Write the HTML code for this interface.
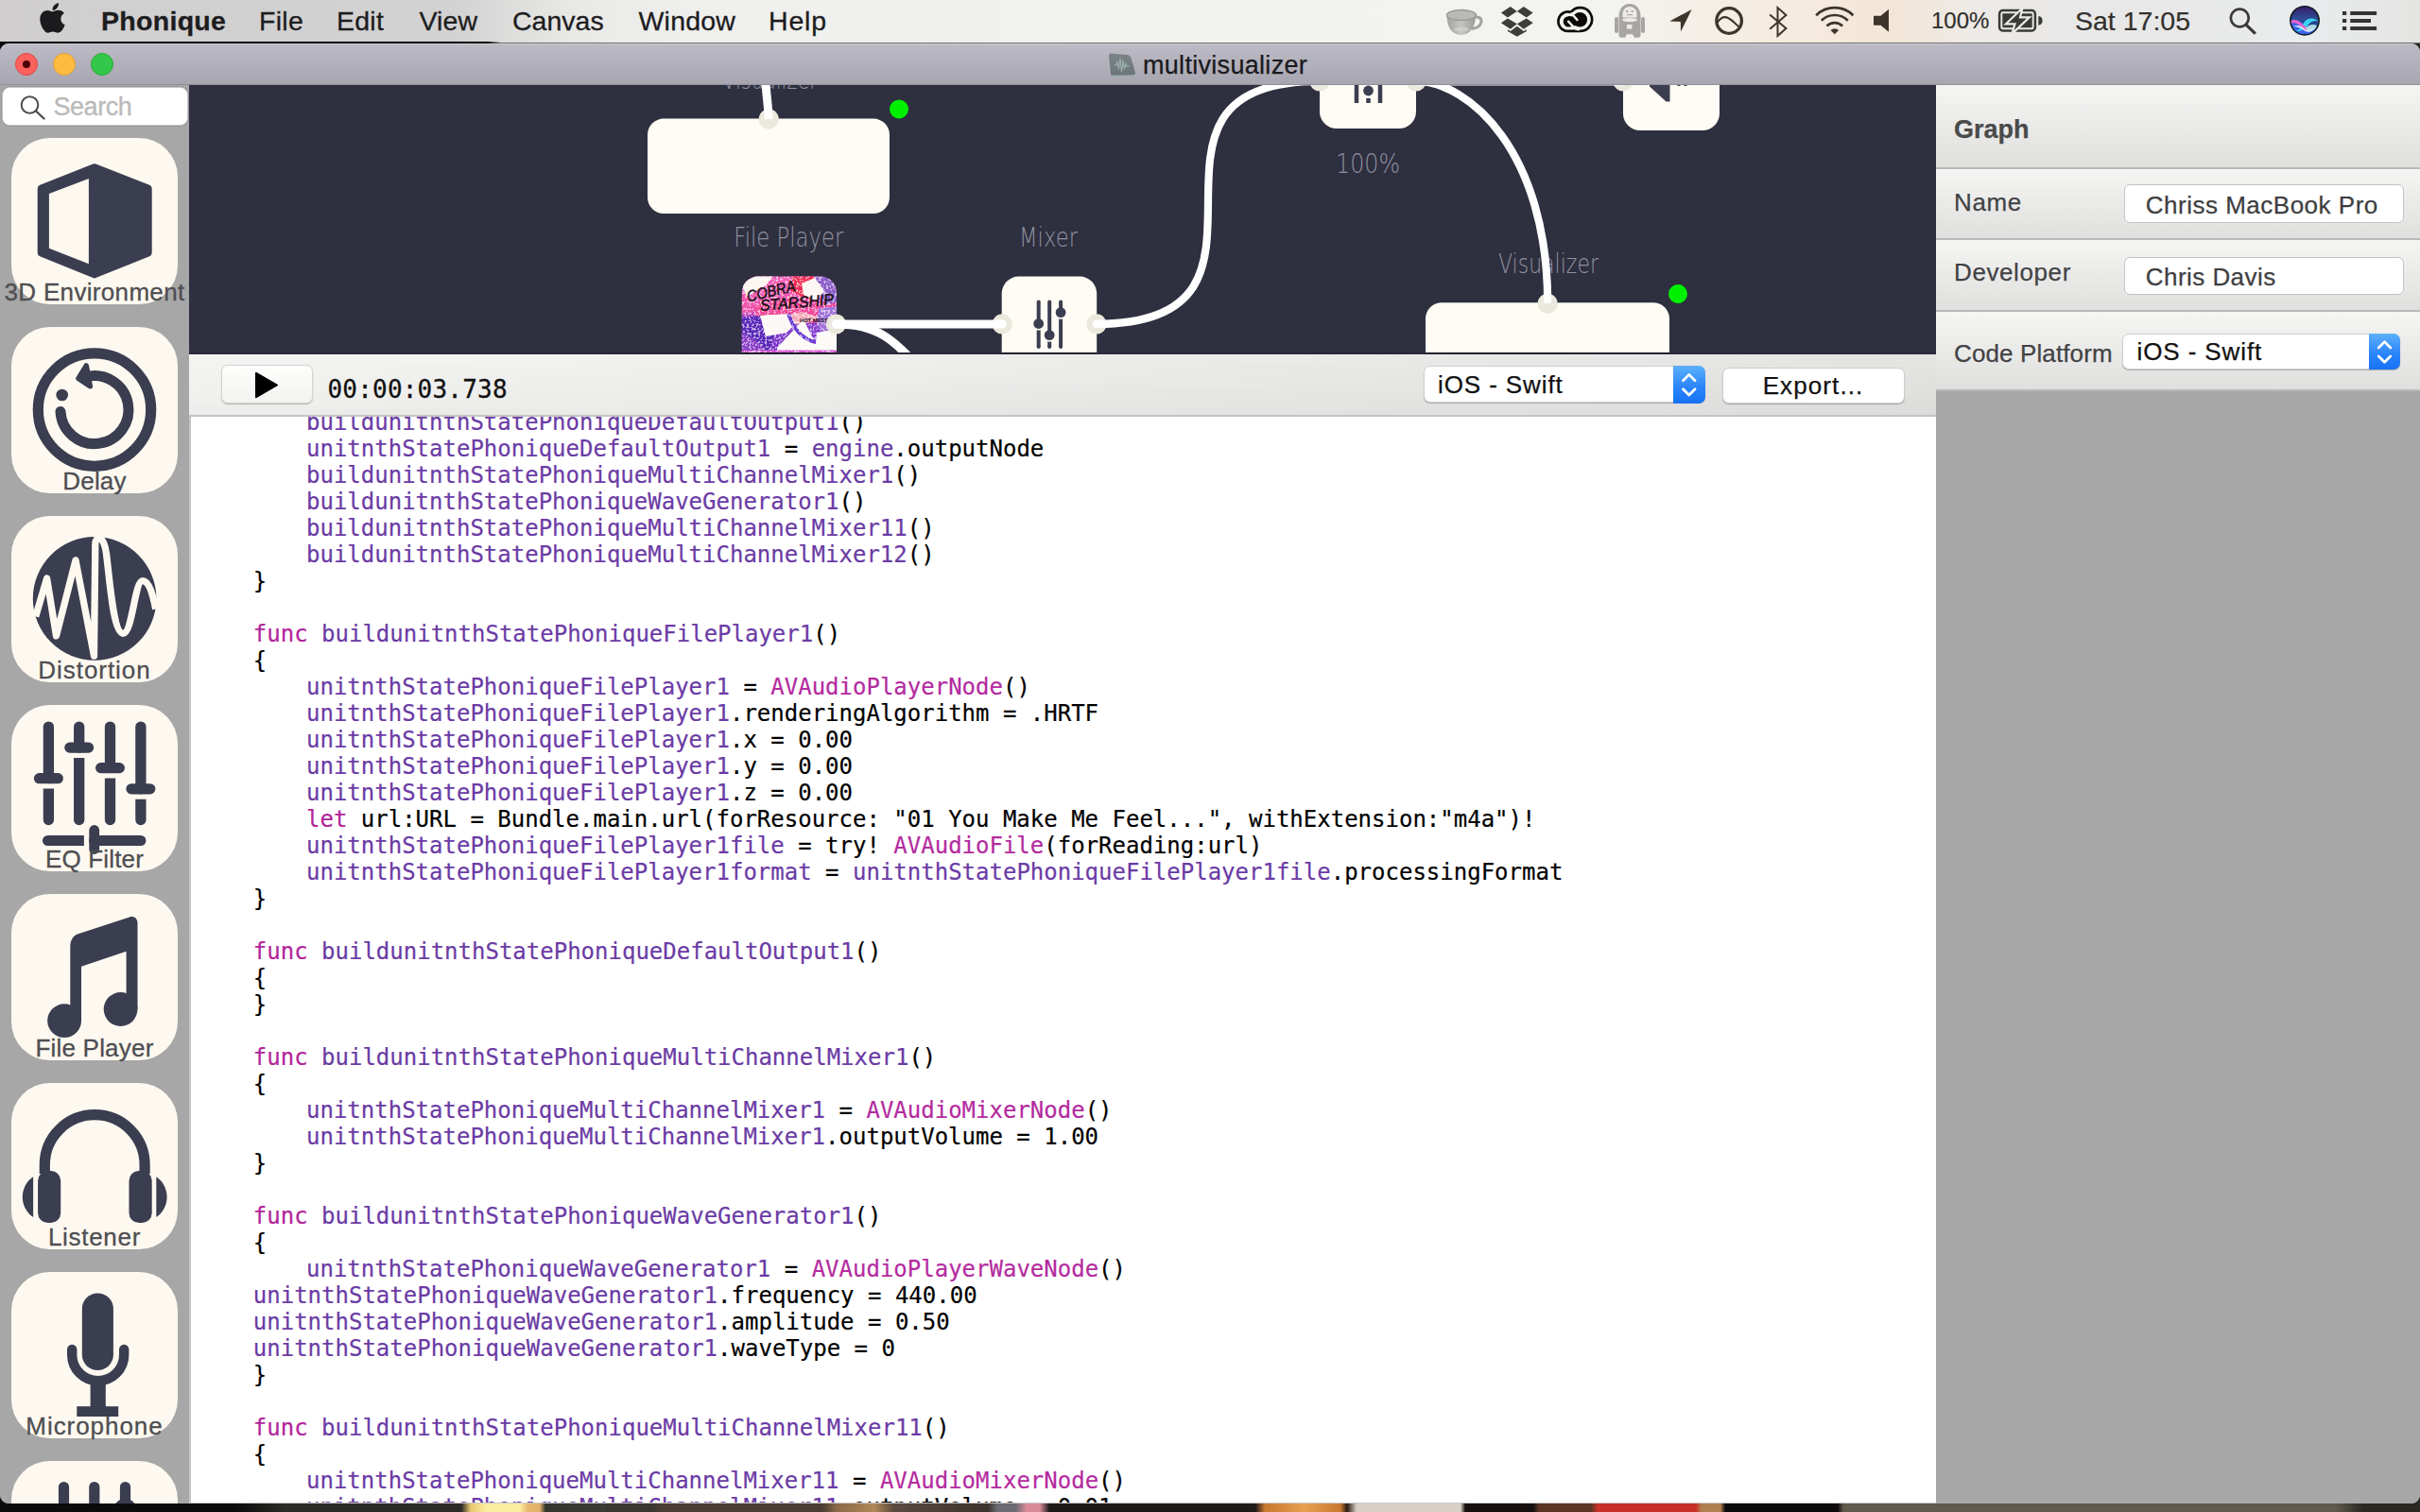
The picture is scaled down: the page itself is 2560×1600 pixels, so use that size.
<!DOCTYPE html>
<html lang="en">
<head>
<meta charset="utf-8">
<title>Phonique - multivisualizer</title>
<style>
*{box-sizing:border-box;margin:0;padding:0}
html,body{width:2560px;height:1600px;overflow:hidden}
body{position:relative;background:#1a1512;font-family:"Liberation Sans",sans-serif;color:#1d1d1f}
.abs{position:absolute}
/* ---------- wallpaper strip ---------- */
#wall{position:absolute;left:0;top:0;width:2560px;height:1600px;background:linear-gradient(90deg,#0b0b0b 0,#0b0b0b 250px,#2a2a28 300px,#2c2b28 488px,#e8c870 498px,#fbeea0 515px,#fbeea0 550px,#e8b870 558px,#e0b068 571px,#34362e 577px,#3a3c36 640px,#3a3632 644px,#3a3632 690px,#4a3d33 700px,#4a3d33 870px,#8a6a48 885px,#b08858 925px,#5a4a3e 945px,#3c332e 1045px,#6a6a70 1055px,#6a6a70 1074px,#d88a98 1086px,#d88a98 1100px,#1f1a1a 1110px,#1f1a1a 1328px,#c87830 1338px,#e8a050 1380px,#c87830 1418px,#2a1a12 1425px,#d8d0c4 1435px,#d8d0c4 1545px,#15100f 1550px,#15100f 1622px,#5a3525 1628px,#5a3525 1683px,#c83028 1690px,#c83028 1794px,#b08050 1800px,#b08050 1820px,#0c0a0a 1825px,#0c0a0a 1944px,#5e5a4c 1950px,#5e5a4c 2470px,#2a2822 2500px,#2a2822 2560px)}
/* ---------- menubar ---------- */
#menubar{position:absolute;left:0;top:0;width:2560px;height:44.500px;background:linear-gradient(90deg,#d0cece 0,#d3d2d2 480px,#dcdbda 530px,#e9e9e7 610px,#efefed 720px,#f2f2ef 1300px,#f3f3f0 1700px,#f5ebde 1900px,#f3e6d8 2000px,#eeeae6 2080px,#e9e8e7 2160px,#e8e8e8 2300px,#e9eced 2440px,#e4e4e2 2560px);font-size:28.5px;color:#1d1d1f}
#menubar .mi{position:absolute;top:0;height:44px;line-height:45px;white-space:nowrap;-webkit-text-stroke:.3px #1d1d1f}
#menuline{position:absolute;left:0;top:43.500px;width:2560px;height:2.500px;background:linear-gradient(180deg,rgba(0,0,0,0) 0,rgba(0,0,0,0) 1px,#6e6d6b 1px,#6e6d6b 100%)}
#menuline2{position:absolute;left:0;top:43.500px;width:540px;height:2.500px;background:linear-gradient(90deg,#000 0,#000 515px,rgba(0,0,0,0) 530px)}
/* ---------- window ---------- */
#window{position:absolute;left:0;top:46px;width:2560px;height:1545px;border-radius:9px;overflow:hidden;background:#a7a7a7}
#titlebar{position:absolute;left:0;top:0;width:2560px;height:44px;background:linear-gradient(180deg,#bcbac4 0,#b4b2bc 40%,#a7a5af 100%);border-top:1px solid #cfcdd7;border-bottom:1px solid #908e98}
.tl{position:absolute;top:9px;width:24px;height:24px;border-radius:50%}
#title{position:absolute;left:1209px;top:0;height:44px;line-height:44px;font-size:27px;letter-spacing:.3px;color:#19181c;white-space:nowrap;-webkit-text-stroke:.25px #19181c}
/* ---------- sidebar ---------- */
#sidebar{position:absolute;left:0;top:44px;width:200px;height:1501px;background:#a7a7a7;overflow:hidden}
#search{position:absolute;left:1.500px;top:1.500px;width:197.500px;height:41px;background:#fff;border-radius:8px;border:1px solid #c4c4c4;box-shadow:0 0 0 .6px #8c8c8c}
#search span{position:absolute;left:54px;top:1px;line-height:38px;font-size:27px;letter-spacing:-.45px;color:#bababa;-webkit-text-stroke:.35px #bababa}
.tile{position:absolute;left:12px;width:176px;height:176px;border-radius:41px;background:#fef9f0}
.tile .lb{position:absolute;left:-12px;width:200px;text-align:center;top:147.600px;font-size:26px;line-height:30px;color:#4e4e52;white-space:nowrap;-webkit-text-stroke:.3px #4e4e52}
.tile svg{position:absolute;left:0;top:0}
/* ---------- canvas ---------- */
#canvas{position:absolute;left:200px;top:44px;width:1848px;height:284.600px;background:#2e2f3f;overflow:hidden}
#canvas svg{position:absolute;left:0;top:0}
/* ---------- toolbar ---------- */
#toolbar{position:absolute;left:200px;top:328.600px;width:1848px;height:66.400px;background:linear-gradient(180deg,rgba(255,255,255,.12) 0,rgba(0,0,0,.025) 100%),linear-gradient(90deg,#f3f3f1 0,#eeeeec 35%,#e6e6e4 70%,#e1e1df 100%);border-bottom:2px solid #c4c4c4}
.btn{-webkit-text-stroke:.25px;position:absolute;background:#fff;border-radius:7px;border:1px solid #cfcfcf;box-shadow:0 1px 1px rgba(0,0,0,.25)}
/* ---------- code ---------- */
#code{position:absolute;left:200px;top:395px;width:1848px;height:1150px;background:#fff;border-left:2px solid #c4c4c4;overflow:hidden}
#code pre{position:absolute;left:8px;top:-8px;font-family:"DejaVu Sans Mono","Liberation Mono",monospace;font-size:24px;line-height:28px;color:#000;white-space:pre;-webkit-text-stroke:.2px}
.s{letter-spacing:-.4px}.p{color:#6b3ba5}.k{color:#b2259a}.t{color:#b42ba0}
/* ---------- inspector ---------- */
#insp{position:absolute;left:2048px;top:44px;width:512px;height:1501px;background:#a7a7a7}
.row{position:absolute;left:0;width:512px;background:linear-gradient(180deg,#f5f5f3 0,#ebebea 45%,#dfdfde 100%);border-bottom:2px solid #b9b9b9;font-size:26px;color:#424244;-webkit-text-stroke:.25px}
.row .lab{position:absolute;left:19px;white-space:nowrap}
.inp{position:absolute;background:#fff;border:1px solid #c3c3c3;border-radius:6px;font-size:26px;color:#3e3e40;white-space:nowrap}
</style>
</head>
<body>
<div id="wall"></div>
<div id="menubar">
<svg class="abs" style="left:41.7px;top:1.7px" width="27" height="34" viewBox="0 28 385 456"><path fill="#1b1a1c" d="M318.7 268.7c-.2-36.7 16.4-64.4 50-84.8-18.8-26.9-47.2-41.7-84.7-44.6-35.5-2.8-74.3 20.7-88.5 20.7-15 0-49.4-19.7-76.4-19.7C63.3 141.2 4 184.8 4 273.5q0 39.3 14.4 81.2c12.8 36.7 59 126.7 107.2 125.2 25.2-.6 43-17.9 75.8-17.9 31.8 0 48.3 17.9 76.4 17.9 48.6-.7 90.4-82.5 102.6-119.3-65.2-30.7-61.7-90-61.7-91.9zm-56.6-164.2c27.3-32.4 24.8-61.9 24-72.5-24.1 1.4-52 16.4-67.9 34.9-17.5 19.8-27.8 44.3-25.6 71.9 26.1 2 49.9-11.4 69.5-34.3z"/></svg>
<div class="mi" style="left:107px;font-weight:bold;letter-spacing:.3px">Phonique</div>
<div class="mi" style="left:274px;letter-spacing:.3px">File</div>
<div class="mi" style="left:356px;letter-spacing:.25px">Edit</div>
<div class="mi" style="left:443.5px;letter-spacing:.1px">View</div>
<div class="mi" style="left:542px;letter-spacing:0px">Canvas</div>
<div class="mi" style="left:675.5px;letter-spacing:.2px">Window</div>
<div class="mi" style="left:813px;letter-spacing:.8px">Help</div>
<div class="mi" style="left:2043px;font-size:24px;letter-spacing:0px;line-height:43px;color:#33302d;-webkit-text-stroke:.2px #33302d">100%</div>
<div class="mi" style="left:2195px;letter-spacing:0px;color:#33302d;-webkit-text-stroke:.2px #33302d">Sat 17:05</div>
<svg class="abs" style="left:1500px;top:0" width="1060" height="44" viewBox="1500 0 1060 44">
<defs>
<linearGradient id="cupg" x1="0" y1="0" x2="1" y2="0"><stop offset="0" stop-color="#a3a3a1"/><stop offset=".5" stop-color="#c4c4c2"/><stop offset="1" stop-color="#9b9b99"/></linearGradient>
<linearGradient id="sirig" x1="0" y1="0" x2="0" y2="1"><stop offset="0" stop-color="#3b1d6e"/><stop offset=".45" stop-color="#2c4f96"/><stop offset="1" stop-color="#1a2f8c"/></linearGradient>
<clipPath id="siric"><circle cx="2438" cy="21.8" r="14.3"/></clipPath>
</defs>
<!-- cup -->
<g>
<path d="M1557 18.5c6-1.5 10.500 0 10 4.500c-.5 4-4.500 7-10 7.500" fill="none" stroke="#a4a4a2" stroke-width="3"/>
<path d="M1530.500 16c0 12 5 21 15 21s15.500-9 15.500-21z" fill="url(#cupg)"/>
<ellipse cx="1546" cy="16" rx="15.500" ry="5.500" fill="#b9b9b7" stroke="#9a9a98" stroke-width="1.500"/>
<ellipse cx="1546" cy="31" rx="8" ry="2.500" fill="#d4d4d2" opacity=".7"/>
</g>
<!-- dropbox -->
<g fill="#3d3d3b">
<path d="M1587.900 13.400l9.900-6.500 7 5.200-9.900 6.500z"/>
<path d="M1621.700 13.400l-9.900-6.500-7 5.200 9.900 6.500z"/>
<path d="M1587.900 24.300l7-4.700 9.900 5.700-7 5.400z"/>
<path d="M1621.700 24.300l-7-4.700-9.900 5.700 7 5.400z"/>
<path d="M1594.900 31.200l2.900 1.900 7-5.300 7.100 5.300 3-1.900v1.800l-10.100 5.700-9.900-5.700z"/>
</g>
<!-- creative cloud -->
<g>
<path d="M1658.600 32.900A10.200 10.200 0 1 1 1661.800 13A12.400 12.400 0 1 1 1671.700 32.900z" fill="#f3f3f0" stroke="#0d0b08" stroke-width="2.700" stroke-linejoin="round"/>
<circle cx="1659.400" cy="22.900" r="5.700" fill="#0d0b08"/>
<circle cx="1671.300" cy="20.800" r="7.800" fill="#0d0b08"/>
<path d="M1659 17.300l6 0 5 6 -5 5 -6-2z" fill="#0d0b08"/>
<path d="M1659 22.700l5.700 5.900c1.500 1.500 3.300 2.500 5.500 2.700" fill="none" stroke="#f3f3f0" stroke-width="2.400" stroke-linecap="round"/>
<path d="M1662.500 14.300l6 6.800" fill="none" stroke="#f3f3f0" stroke-width="2.400" stroke-linecap="round"/>
</g>
<!-- robot -->
<g fill="#a8a6a2">
<path d="M1712.500 17.500c0-8 4.500-13.500 11.500-13.500s11.500 5.500 11.500 13.500v19.500c0 1.500-1 2.700-2.500 2.700h-4l-2-3.500h-6l-2 3.500h-4c-1.500 0-2.500-1.200-2.500-2.700z"/>
<rect x="1708" y="18" width="4" height="17" rx="2"/>
<rect x="1736" y="18" width="4" height="17" rx="2"/>
</g>
<path d="M1716.500 15.500c0-5 3-8.500 7.500-8.500s7.500 3.500 7.500 8.500v3h-15z" fill="#ecebe7"/>
<ellipse cx="1724" cy="21" rx="8" ry="2" fill="#ecebe7"/>
<rect x="1721" y="26" width="5.500" height="4.500" fill="#ecebe7"/>
<rect x="1720.300" y="11" width="2" height="2" fill="#a8a6a2"/><rect x="1725.700" y="11" width="2" height="2" fill="#a8a6a2"/><rect x="1721" y="15" width="6" height="1.200" fill="#a8a6a2"/>
<!-- location arrow -->
<path d="M1789.600 9.900l-23.400 12.600 11.600.4.200 10.500z" fill="#3d352c"/>
<!-- circle curve -->
<circle cx="1829.100" cy="22" r="13.300" fill="none" stroke="#3d352c" stroke-width="3.300"/>
<path d="M1817 23.500c3-4.500 7-6.500 11-4.500 4.500 2.200 8.500 7 12.500 10" fill="none" stroke="#3d352c" stroke-width="2"/>
<!-- bluetooth -->
<path d="M1872.200 15.400l17.200 14.500-8.900 8v-29.800l8.900 7.800-17.200 14.800" fill="none" stroke="#3d352c" stroke-width="2" stroke-linejoin="miter"/>
<!-- wifi -->
<g fill="none" stroke="#3d352c" stroke-width="2.700">
<path d="M1921.200 16.200a27.800 27.800 0 0 1 39.200 0"/>
<path d="M1926.800 21.800a19.800 19.800 0 0 1 28 0"/>
<path d="M1932.500 27.500a11.800 11.800 0 0 1 16.600 0"/>
</g>
<path d="M1940.800 36.200l-4.300-4.300a6.100 6.100 0 0 1 8.600 0z" fill="#3d352c"/>
<!-- volume -->
<path d="M1982 17.800c0-.6.400-1 1-1h6.500l8.500-7v24l-8.500-7h-6.500c-.6 0-1-.4-1-1z" fill="#3d352c"/>
<!-- battery -->
<rect x="2115.100" y="11.100" width="37.800" height="21.400" rx="3.500" fill="none" stroke="#3a3a38" stroke-width="2.500"/>
<rect x="2118.300" y="14.300" width="31.400" height="15" rx="1" fill="#3a3a38"/>
<path d="M2156.300 16.900a5 5 0 0 1 0 9.900z" fill="#3a3a38"/>
<path d="M2139.500 8.500l-17.500 16.800h9.500l-3.200 10.500 18.500-17.500h-9.800z" fill="#3a3a38" stroke="#ecebe9" stroke-width="2.200" stroke-linejoin="miter"/>
<!-- spotlight -->
<circle cx="2369.300" cy="19" r="9.400" fill="none" stroke="#3a3a3a" stroke-width="2.700"/>
<path d="M2376.200 26.300l9.600 9.400" stroke="#3a3a3a" stroke-width="3.200" stroke-linecap="butt"/>
<!-- siri -->
<circle cx="2438" cy="21.800" r="15.900" fill="#0e1c24"/>
<circle cx="2438" cy="21.800" r="14.300" fill="url(#sirig)"/>
<g clip-path="url(#siric)">
<path d="M2422 24c5-4 10-3 15 1.500s10 6 17 2v12h-32z" fill="#3a63e8"/>
<path d="M2436 26c4-8 12-8 17-3-4-2-8-1-11 3s-8 8-14 7c4-1 6-4 8-7z" fill="#38d6f0"/>
<path d="M2423 22c4-2 8-1 12 3s8 7 14 6c-5 3-10 2-14-2s-8-6-12-4z" fill="#ea5fd0"/>
<path d="M2426 28c4-2 8-1 11 2s8 3 12 0c-3 4-8 5-12 2s-7-4-11-4z" fill="#eef4ff" opacity=".9"/>
<path d="M2439 30c3-4 8-5 12-3-1 4-5 6-9 6z" fill="#c6f5f4" opacity=".85"/>
</g>
<!-- notification list -->
<g fill="#333">
<rect x="2478" y="12" width="4.200" height="4"/><rect x="2486.200" y="12" width="27.900" height="4"/>
<rect x="2478" y="20" width="4.200" height="4"/><rect x="2486.200" y="20" width="21.800" height="4"/>
<rect x="2478" y="28" width="4.200" height="4"/><rect x="2486.200" y="28" width="27.900" height="4"/>
</g>
</svg>
</div>
<div id="menuline"></div><div id="menuline2"></div>
<div id="window">
<div id="titlebar">
<div class="tl" style="left:16px;background:#fc615d;border:1px solid #df4744"></div>
<div class="abs" style="left:24px;top:17px;width:8px;height:8px;border-radius:50%;background:#4c0102"></div>
<div class="tl" style="left:56px;background:#fdbc40;border:1px solid #de9f34"></div>
<div class="tl" style="left:96px;background:#34c84a;border:1px solid #27aa35"></div>
<svg class="abs" style="left:1170px;top:7px" width="34" height="30" viewBox="1170 53 34 30">
<defs><linearGradient id="ticg" x1="0" y1="0" x2="0" y2="1"><stop offset="0" stop-color="#7d8487"/><stop offset="1" stop-color="#6a7477"/></linearGradient></defs>
<path d="M1175 55.500l17.500 1.500c2 .2 3.500 1.500 4 3.500l4.500 15.500c.5 2-1 3.500-3 3.500l-19.500.5c-2 0-3.500-1.500-3.500-3.500l-2-18c-.2-2 .8-3.200 2-3z" fill="url(#ticg)"/>
<path d="M1176 79.500l22-.5c1.500 0 2.500-.5 3-1.500" fill="none" stroke="#9fb0b0" stroke-width="1.500"/>
<path d="M1179 68h2l1-4 1.500 8 1.500-11 1.500 14 1.500-12 1.500 9 1.500-6 1 3h3" fill="none" stroke="#a3bab6" stroke-width="1.200" opacity=".85" stroke-linejoin="round"/>
</svg>
<div id="title">multivisualizer</div>
</div>
<div id="sidebar">
<div id="search"><svg class="abs" style="left:17px;top:7px" width="30" height="28" viewBox="0 0 30 28"><circle cx="11.500" cy="11" r="8.800" fill="none" stroke="#4d4d4d" stroke-width="2"/><path d="M18 17.500l8.500 8" stroke="#4d4d4d" stroke-width="2.400" stroke-linecap="round"/></svg><span>Search</span></div>
<div class="tile" style="top:56px"><svg width="176" height="176" viewBox="0 0 176 176"><path d="M87.900 31.300L144.700 53.500V121.500L87.900 144.400L31.700 121.500V53.500Z" fill="#3b3d50" stroke="#3b3d50" stroke-width="8" stroke-linejoin="round"/><path d="M39.900 59.100L81.900 42.900V133.200L39.900 116.700Z" fill="#fef9f0"/></svg><div class="lb" style="letter-spacing:0.33px">3D Environment</div></div>
<div class="tile" style="top:256px"><svg width="176" height="176" viewBox="0 0 176 176"><circle cx="88" cy="87.600" r="59.700" fill="none" stroke="#3b3d50" stroke-width="11.200"/>
<path d="M78.700 52.800A36 36 0 1 1 52 89.500" fill="none" stroke="#3b3d50" stroke-width="11" stroke-linecap="round"/>
<path d="M71 54.400L79.300 41L83.300 62.800Z" fill="#3b3d50" stroke="#3b3d50" stroke-width="5.500" stroke-linejoin="round"/>
<circle cx="53.700" cy="72" r="6.300" fill="#3b3d50"/></svg><div class="lb" style="letter-spacing:0.2px">Delay</div></div>
<div class="tile" style="top:456px"><svg width="176" height="176" viewBox="0 0 176 176"><circle cx="88.100" cy="87.400" r="65.300" fill="#3b3d50"/>
<path d="M25.700 106.400L37.600 66.100L47.500 126.900L68 46.900L87.500 148.100L88.800 30C89 20 98 20 100.500 40C104.500 72 108 124.300 118.300 124.300C128 124.300 130.500 68.700 138.800 68.700C146 68.700 150 85 152.700 98.500" fill="none" stroke="#fef9f0" stroke-width="7.300" stroke-linejoin="round" stroke-linecap="butt"/></svg><div class="lb" style="letter-spacing:0.95px">Distortion</div></div>
<div class="tile" style="top:656px"><svg width="176" height="176" viewBox="0 0 176 176"><path d="M39.4 23.100V77.7" stroke="#3b3d50" stroke-width="11.3" stroke-linecap="round" fill="none"/><rect x="23.9" y="72.1" width="31" height="11.2" rx="5.600" fill="#3b3d50"/><path d="M33.75 88.6H45.05V121.500A5.650 5.650 0 0 1 33.75 121.500Z" fill="#3b3d50"/><path d="M71.7 23.100V45.1" stroke="#3b3d50" stroke-width="11.3" stroke-linecap="round" fill="none"/><rect x="56.2" y="39.5" width="31" height="11.2" rx="5.600" fill="#3b3d50"/><path d="M66.05 56.0H77.35V121.500A5.650 5.650 0 0 1 66.05 121.500Z" fill="#3b3d50"/><path d="M104.5 23.100V66.6" stroke="#3b3d50" stroke-width="11.3" stroke-linecap="round" fill="none"/><rect x="89.0" y="61.0" width="31" height="11.2" rx="5.600" fill="#3b3d50"/><path d="M98.85 77.5H110.15V121.500A5.650 5.650 0 0 1 98.85 121.500Z" fill="#3b3d50"/><path d="M136.9 23.100V88.8" stroke="#3b3d50" stroke-width="11.3" stroke-linecap="round" fill="none"/><rect x="121.4" y="83.2" width="31" height="11.2" rx="5.600" fill="#3b3d50"/><path d="M131.25 99.7H142.55V121.500A5.650 5.650 0 0 1 131.25 121.500Z" fill="#3b3d50"/><path d="M38.600 137.900H76.900V149.100H38.600A5.600 5.600 0 0 1 38.600 137.900Z" fill="#3b3d50"/><path d="M87.700 143.500H136.800" stroke="#3b3d50" stroke-width="11.200" stroke-linecap="round"/><path d="M87.700 132.500V152.500" stroke="#3b3d50" stroke-width="10.800" stroke-linecap="round"/></svg><div class="lb" style="letter-spacing:0.15px">EQ Filter</div></div>
<div class="tile" style="top:856px"><svg width="176" height="176" viewBox="0 0 176 176"><circle cx="56.100" cy="134.200" r="17.900" fill="#3b3d50"/><circle cx="115.600" cy="122" r="17.900" fill="#3b3d50"/>
<path d="M62.300 134V56C62.300 49 65 44.500 70 42.500L125 24.500C130 23 133.500 26 133.500 31V122H121.600V60.800L74 76.700V134Z" fill="#3b3d50"/></svg><div class="lb" style="letter-spacing:0.2px">File Player</div></div>
<div class="tile" style="top:1056px"><svg width="176" height="176" viewBox="0 0 176 176"><path d="M35.300 96V86.600A52.900 52.900 0 0 1 141.100 86.600V96" fill="none" stroke="#3b3d50" stroke-width="11.200"/>
<rect x="28.100" y="92.900" width="24.100" height="55.200" rx="10.500" fill="#3b3d50"/><rect x="124.500" y="92.900" width="24.200" height="55.200" rx="10.500" fill="#3b3d50"/>
<path d="M23.100 99.200A26 26 0 0 0 23.100 142.100Z" fill="#3b3d50"/><path d="M153.300 99.200A26 26 0 0 1 153.300 142.100Z" fill="#3b3d50"/></svg><div class="lb" style="letter-spacing:0.7px">Listener</div></div>
<div class="tile" style="top:1256px"><svg width="176" height="176" viewBox="0 0 176 176"><rect x="74.800" y="22.400" width="33.100" height="81.600" rx="16.550" fill="#3b3d50"/>
<path d="M64.200 82V87.700A27.500 27.500 0 0 0 119.200 87.700V82" fill="none" stroke="#3b3d50" stroke-width="10.400" stroke-linecap="round"/>
<rect x="83.600" y="114" width="16.200" height="29" fill="#3b3d50"/><rect x="69.300" y="142.200" width="43.900" height="10.800" fill="#3b3d50"/></svg><div class="lb" style="letter-spacing:0.95px">Microphone</div></div>
<div class="tile" style="top:1456px"><svg width="176" height="176" viewBox="0 0 176 176"><path d="M55.500 27.500V120M87.800 27.500V120M120.500 27.500V120" stroke="#3b3d50" stroke-width="11.200" stroke-linecap="round" fill="none"/><circle cx="120.400" cy="53" r="12.900" fill="#3b3d50"/></svg><div class="lb" style="letter-spacing:0px">Mixer</div></div>

</div>
<div id="canvas">
<svg width="1848" height="284" viewBox="200 90 1848 284">
<defs>
<clipPath id="artc"><path d="M784.800 374V309.600a17 17 0 0 1 17-17h66.200a17 17 0 0 1 17 17V374z"/></clipPath>
<filter id="grn" x="0" y="0" width="100%" height="100%"><feTurbulence type="fractalNoise" baseFrequency=".42" numOctaves="2" seed="7" result="n"/><feColorMatrix in="n" type="matrix" values="0 0 0 0 1  0 0 0 0 1  0 0 0 0 1  0 0 0 9 -4.600"/><feComposite in2="SourceGraphic" operator="in"/></filter>
<linearGradient id="artg" x1="0" y1="0" x2="0" y2="1"><stop offset="0" stop-color="#f060b8"/><stop offset=".45" stop-color="#ee4fa8"/><stop offset=".55" stop-color="#8a3fd0"/><stop offset="1" stop-color="#7a35c8"/></linearGradient>
</defs>
<g font-family="'DejaVu Sans Light','DejaVu Sans','Liberation Sans',sans-serif" font-weight="200" font-size="28" fill="#9091a0" text-anchor="middle">
<text x="814.500" y="94" textLength="101" lengthAdjust="spacingAndGlyphs">Visualizer</text>
<text x="834.300" y="260.600" textLength="116" lengthAdjust="spacingAndGlyphs">File Player</text>
<text x="1109" y="260.600" textLength="62" lengthAdjust="spacingAndGlyphs">Mixer</text>
<text x="1447" y="183" textLength="68" lengthAdjust="spacingAndGlyphs">100%</text>
<text x="1638" y="288.800" textLength="106" lengthAdjust="spacingAndGlyphs">Visualizer</text>
</g>
<!-- nodes -->
<rect x="685" y="125.600" width="256" height="100.400" rx="17" fill="#fefcf4"/>
<circle cx="951" cy="115.500" r="10" fill="#00f100"/>
<rect x="1508" y="320.300" width="258" height="80" rx="17" fill="#fefcf4"/>
<circle cx="1775" cy="311" r="10" fill="#00f100"/>
<rect x="1059.700" y="292.600" width="100.500" height="100" rx="18" fill="#fefcf4"/>
<rect x="1396" y="36" width="102" height="100" rx="18" fill="#fefcf4"/>
<rect x="1717" y="38" width="102" height="100" rx="18" fill="#fefcf4"/>
<!-- album art -->
<g clip-path="url(#artc)">
<rect x="784" y="292" width="102" height="82" fill="url(#artg)"/>
<path d="M784 300l14-8h20l-8 10-20 12z" fill="#fbf4f0"/>
<path d="M838 292h22l8 14-10 12-22-10z" fill="#ee2a50"/>
<path d="M862 292h24v28l-12 2-10-16z" fill="#8a5cc8"/>
<path d="M848 300l14-6 10 14-8 10-14-6z" fill="#fdf6f2"/>
<path d="M800 322l40-6 30 8 16-4v20l-30 2-30-8-26 4z" fill="#f0489a"/>
<path d="M826 334l22-4 20 6-14 6-20 2z" fill="#f6a8b8"/>
<path d="M784 336l22-2 14 18-8 22h-28z" fill="#5a28b8"/>
<path d="M804 334l30-2 8 10-10 10-22 4z" fill="#fbf6f4"/>
<path d="M822 368l28-30 14 28 22 4v4h-64z" fill="#fdfaf6"/>
<path d="M834 332c6 20 22 34 42 30" fill="none" stroke="#6a3ad0" stroke-width="4"/>
<path d="M866 326l20-2v28l-14 6-8-16z" fill="#a070d8"/>
<path d="M864 352l22-4v26h-24z" fill="#fdfaf6"/>
<path d="M784 370.500h102v4h-102z" fill="#d458d0"/><path d="M784 352l12 6 14 12h-26z" fill="#8a40c8"/>
<rect x="784" y="292" width="102" height="82" fill="#ffffff" filter="url(#grn)" opacity=".6"/>
<g font-family="'Liberation Sans',sans-serif" font-style="italic" fill="#1a1118" stroke="#1a1118" stroke-width=".5">
<text x="791.500" y="319.500" font-size="16.500" textLength="52" lengthAdjust="spacingAndGlyphs" transform="rotate(-13 791.500 319.500)">COBRA</text>
<text x="804.500" y="329" font-size="16.500" textLength="78" lengthAdjust="spacingAndGlyphs" transform="rotate(-5 804.500 329)">STARSHIP</text>
</g>
<text x="846" y="341" font-family="'Liberation Sans',sans-serif" font-weight="bold" font-size="6" fill="#1a1118" textLength="30" lengthAdjust="spacingAndGlyphs">HOT MESS</text>
</g>
<!-- ports -->
<g fill="#ebe8dd">
<circle cx="813.300" cy="126.100" r="10.600"/><circle cx="884.500" cy="343" r="10.600"/><circle cx="1060.200" cy="342.900" r="10.600"/><circle cx="1160" cy="342.900" r="10.600"/>
<circle cx="1396" cy="86" r="10.600"/><circle cx="1498" cy="86" r="10.600"/><circle cx="1637.200" cy="321.300" r="10.600"/><circle cx="1717" cy="86" r="10.600"/>
</g>
<!-- connections -->
<g fill="none" stroke="#ffffff" stroke-width="9" stroke-linecap="round">
<path d="M808.500 70C810 95 812.500 110 813.300 126" stroke-linecap="butt"/>
<path d="M884.500 343H1060.200"/>
<path d="M884.500 343C930 343 945 360 975 392"/>
<path d="M1160 342.900C1394 342.900 1162 86 1396 86" stroke-width="8.200"/>
<path d="M1498 86C1554 86 1637.200 160.600 1637.200 320.800" stroke-width="8.200" stroke-linecap="butt"/>
<path d="M1498 86H1717"/>
</g>
<!-- mixer icons -->
<path d="M1098.7 319.5V342.5" stroke="#3b3d50" stroke-width="4" stroke-linecap="round"/><circle cx="1098.7" cy="342.5" r="5.400" fill="#3b3d50"/><path d="M1098.7 349.5V367" stroke="#3b3d50" stroke-width="4" stroke-linecap="butt"/><circle cx="1098.7" cy="367" r="2" fill="#3b3d50"/><path d="M1110.2 319.5V354.6" stroke="#3b3d50" stroke-width="4" stroke-linecap="round"/><circle cx="1110.2" cy="354.6" r="5.400" fill="#3b3d50"/><path d="M1110.2 361.6V367" stroke="#3b3d50" stroke-width="4" stroke-linecap="butt"/><circle cx="1110.2" cy="367" r="2" fill="#3b3d50"/><path d="M1122.1 319.5V330.6" stroke="#3b3d50" stroke-width="4" stroke-linecap="round"/><circle cx="1122.1" cy="330.6" r="5.400" fill="#3b3d50"/><path d="M1122.1 337.6V367" stroke="#3b3d50" stroke-width="4" stroke-linecap="butt"/><circle cx="1122.1" cy="367" r="2" fill="#3b3d50"/>
<path d="M1435 60V109M1460 60V109M1447.500 60V89M1447.500 104V109" stroke="#3b3d50" stroke-width="4.500" stroke-linecap="butt" fill="none"/><circle cx="1447.500" cy="96" r="5.400" fill="#3b3d50"/>
<path d="M1745 60h21.500v47.500l-4 0-17.500-16z" fill="#3b3d50"/><path d="M1776 88.500v2.500M1783 88.500v2.500" stroke="#3b3d50" stroke-width="3"/>
<rect x="200" y="373" width="1848" height="1.800" fill="#262738"/><path d="M785 373.900h100M1060 373.900h100M1508 373.900h258" stroke="#12131f" stroke-width="1.800"/>
</svg>
</div>
<div id="toolbar">
<div class="btn" style="left:33.500px;top:11px;width:97px;height:41px;background:linear-gradient(180deg,#fdfdfc 0,#f3f3f1 100%);border-color:#d2d2d0"></div>
<svg class="abs" style="left:69px;top:17px" width="28" height="32" viewBox="0 0 28 32"><path d="M2 2.800L24 15.500L2 28.200Z" fill="#000" stroke="#000" stroke-width="2" stroke-linejoin="round"/></svg>
<div class="abs" style="left:146.500px;top:22px;font-family:'DejaVu Sans Mono','Liberation Mono',monospace;font-size:26px;line-height:30px;letter-spacing:.2px;color:#111;white-space:nowrap;-webkit-text-stroke:.3px">00:00:03.738</div>
<div class="btn" style="left:1305.500px;top:12px;width:298px;height:39.500px"><span class="abs" style="left:14.500px;top:1.500px;line-height:37px;font-size:26px;letter-spacing:.9px;color:#111;white-space:nowrap">iOS - Swift</span></div>
<div class="abs" style="left:1570px;top:12.5px;width:33.5px;height:40px;border-radius:0 7px 7px 0;background:linear-gradient(180deg,#5db0fb 0,#2b86fa 55%,#1672f5 100%)"><svg width="33.5" height="40" viewBox="0 0 33.5 40"><path d="M10.45 15.7l6.300-6.300 6.300 6.300M10.45 24.7l6.300 6.300 6.300-6.300" fill="none" stroke="#fff" stroke-width="2.700" stroke-linecap="round" stroke-linejoin="round"/></svg></div>
<div class="btn" style="left:1621.500px;top:14px;width:193px;height:38.500px;text-align:center"><span style="line-height:37px;font-size:26px;letter-spacing:1.100px;color:#111;white-space:nowrap">Export...</span></div>
</div>
<div id="code">
<pre>    <span class="s">    </span><span class="p">buildunitnthStatePhoniqueDefaultOutput1</span>()
    <span class="s">    </span><span class="p">unitnthStatePhoniqueDefaultOutput1</span> = <span class="p">engine</span>.outputNode
    <span class="s">    </span><span class="p">buildunitnthStatePhoniqueMultiChannelMixer1</span>()
    <span class="s">    </span><span class="p">buildunitnthStatePhoniqueWaveGenerator1</span>()
    <span class="s">    </span><span class="p">buildunitnthStatePhoniqueMultiChannelMixer11</span>()
    <span class="s">    </span><span class="p">buildunitnthStatePhoniqueMultiChannelMixer12</span>()
    }

    <span class="k">func</span> <span class="p">buildunitnthStatePhoniqueFilePlayer1</span>()
    {
    <span class="s">    </span><span class="p">unitnthStatePhoniqueFilePlayer1</span> = <span class="t">AVAudioPlayerNode</span>()
    <span class="s">    </span><span class="p">unitnthStatePhoniqueFilePlayer1</span>.renderingAlgorithm = .HRTF
    <span class="s">    </span><span class="p">unitnthStatePhoniqueFilePlayer1</span>.x = 0.00
    <span class="s">    </span><span class="p">unitnthStatePhoniqueFilePlayer1</span>.y = 0.00
    <span class="s">    </span><span class="p">unitnthStatePhoniqueFilePlayer1</span>.z = 0.00
    <span class="s">    </span><span class="k">let</span> url:URL = Bundle.main.url(forResource: "01 You Make Me Feel...", withExtension:"m4a")!
    <span class="s">    </span><span class="p">unitnthStatePhoniqueFilePlayer1file</span> = try! <span class="t">AVAudioFile</span>(forReading:url)
    <span class="s">    </span><span class="p">unitnthStatePhoniqueFilePlayer1format</span> = <span class="p">unitnthStatePhoniqueFilePlayer1file</span>.processingFormat
    }

    <span class="k">func</span> <span class="p">buildunitnthStatePhoniqueDefaultOutput1</span>()
    {
    }

    <span class="k">func</span> <span class="p">buildunitnthStatePhoniqueMultiChannelMixer1</span>()
    {
    <span class="s">    </span><span class="p">unitnthStatePhoniqueMultiChannelMixer1</span> = <span class="t">AVAudioMixerNode</span>()
    <span class="s">    </span><span class="p">unitnthStatePhoniqueMultiChannelMixer1</span>.outputVolume = 1.00
    }

    <span class="k">func</span> <span class="p">buildunitnthStatePhoniqueWaveGenerator1</span>()
    {
    <span class="s">    </span><span class="p">unitnthStatePhoniqueWaveGenerator1</span> = <span class="t">AVAudioPlayerWaveNode</span>()
    <span class="p">unitnthStatePhoniqueWaveGenerator1</span>.frequency = 440.00
    <span class="p">unitnthStatePhoniqueWaveGenerator1</span>.amplitude = 0.50
    <span class="p">unitnthStatePhoniqueWaveGenerator1</span>.waveType = 0
    }

    <span class="k">func</span> <span class="p">buildunitnthStatePhoniqueMultiChannelMixer11</span>()
    {
    <span class="s">    </span><span class="p">unitnthStatePhoniqueMultiChannelMixer11</span> = <span class="t">AVAudioMixerNode</span>()
    <span class="s">    </span><span class="p">unitnthStatePhoniqueMultiChannelMixer11</span>.outputVolume = 0.01
    }
</pre>
</div>
<div class="abs" style="left:200px;top:1543.500px;width:1848px;height:1.500px;background:#c9c9c9"></div>
<div id="insp">
<div class="row" style="top:0;height:88.500px"><span class="lab" style="top:32px;line-height:30px;font-weight:bold;color:#4a4a4a;font-size:27px">Graph</span></div>
<div class="row" style="top:88.500px;height:75.500px"><span class="lab" style="top:20px;line-height:30px;letter-spacing:.6px">Name</span>
<div class="inp" style="left:199.300px;top:16.700px;width:295.500px;height:41.200px"><span class="abs" style="left:21.500px;top:.500px;line-height:41px;letter-spacing:.5px">Chriss MacBook Pro</span></div></div>
<div class="row" style="top:164px;height:75.500px"><span class="lab" style="top:19px;line-height:30px;letter-spacing:.6px">Developer</span>
<div class="inp" style="left:199.300px;top:17.600px;width:295.500px;height:40.400px"><span class="abs" style="left:21.500px;top:0;line-height:40px;letter-spacing:.45px">Chris Davis</span></div></div>
<div class="row" style="top:239.500px;height:84.500px"><span class="lab" style="top:29.500px;line-height:30px;letter-spacing:.12px">Code Platform</span>
<div class="btn" style="left:197px;top:23px;width:294px;height:38.500px"><span class="abs" style="left:14.500px;top:0;line-height:36px;font-size:26px;letter-spacing:.9px;color:#111;white-space:nowrap">iOS - Swift</span></div>
<div class="abs" style="left:458px;top:23px;width:33px;height:38.5px;border-radius:0 7px 7px 0;background:linear-gradient(180deg,#5db0fb 0,#2b86fa 55%,#1672f5 100%)"><svg width="33" height="38.5" viewBox="0 0 33 38.5"><path d="M10.2 14.95l6.300-6.300 6.300 6.300M10.2 23.95l6.300 6.300 6.300-6.300" fill="none" stroke="#fff" stroke-width="2.700" stroke-linecap="round" stroke-linejoin="round"/></svg></div></div>
</div>
</div>
</body>
</html>
